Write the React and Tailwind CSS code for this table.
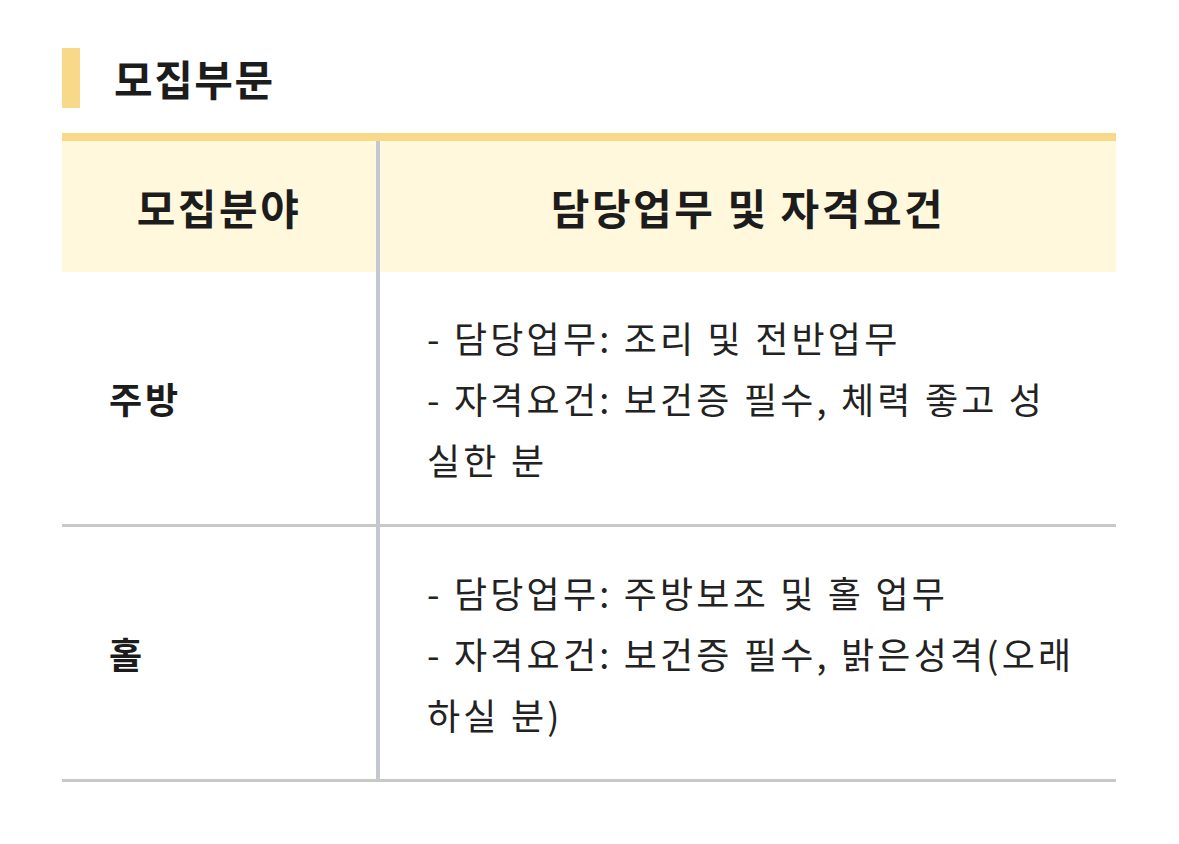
import React from "react";

const rows = [
  {
    name: "주방",
    lines: ["- 담당업무: 조리 및 전반업무", "- 자격요건: 보건증 필수, 체력 좋고 성실한 분"],
  },
  {
    name: "홀",
    lines: ["- 담당업무: 주방보조 및 홀 업무", "- 자격요건: 보건증 필수, 밝은성격(오래하실 분)"],
  },
];

export default function App() {
  return (
    <div
      className="min-h-screen bg-white px-[62px] pt-[48px] text-[#1c1c1c]"
      style={{ fontFamily: '"Noto Sans CJK KR", "Noto Sans", sans-serif' }}
    >
      <div className="flex items-center">
        <div className="w-[18px] h-[60px] bg-[#f8d98a]" />
        <h2 className="ml-[34px] text-[42px] font-bold leading-none tracking-[1.5px]">모집부문</h2>
      </div>

      <div className="mt-[25px] w-[1054px] border-t-[8px] border-[#f8d98a]">
        <div className="grid grid-cols-[314px_1fr] h-[131px] bg-[#fff8dc]">
          <div className="flex items-center justify-center text-[42px] font-bold tracking-[2.5px]">모집분야</div>
          <div className="flex items-center justify-center border-l-4 border-[#c3c7cf] text-[42px] font-bold tracking-[2.5px]">
            담당업무 및 자격요건
          </div>
        </div>
        {rows.map((r) => (
          <div key={r.name} className="grid grid-cols-[314px_1fr] h-[255px] border-b-[3px] border-[#c8c8c8]">
            <div className="flex items-center pl-[47px] text-[36px] font-bold tracking-[3px]">{r.name}</div>
            <div className="flex flex-col justify-center border-l-4 border-[#c3c7cf] pl-[47px] pr-[40px] text-[36px] leading-[61px] tracking-[3.2px] text-[#222]">
              {r.lines.map((l) => (
                <p key={l}>{l}</p>
              ))}
            </div>
          </div>
        ))}
      </div>
    </div>
  );
}
